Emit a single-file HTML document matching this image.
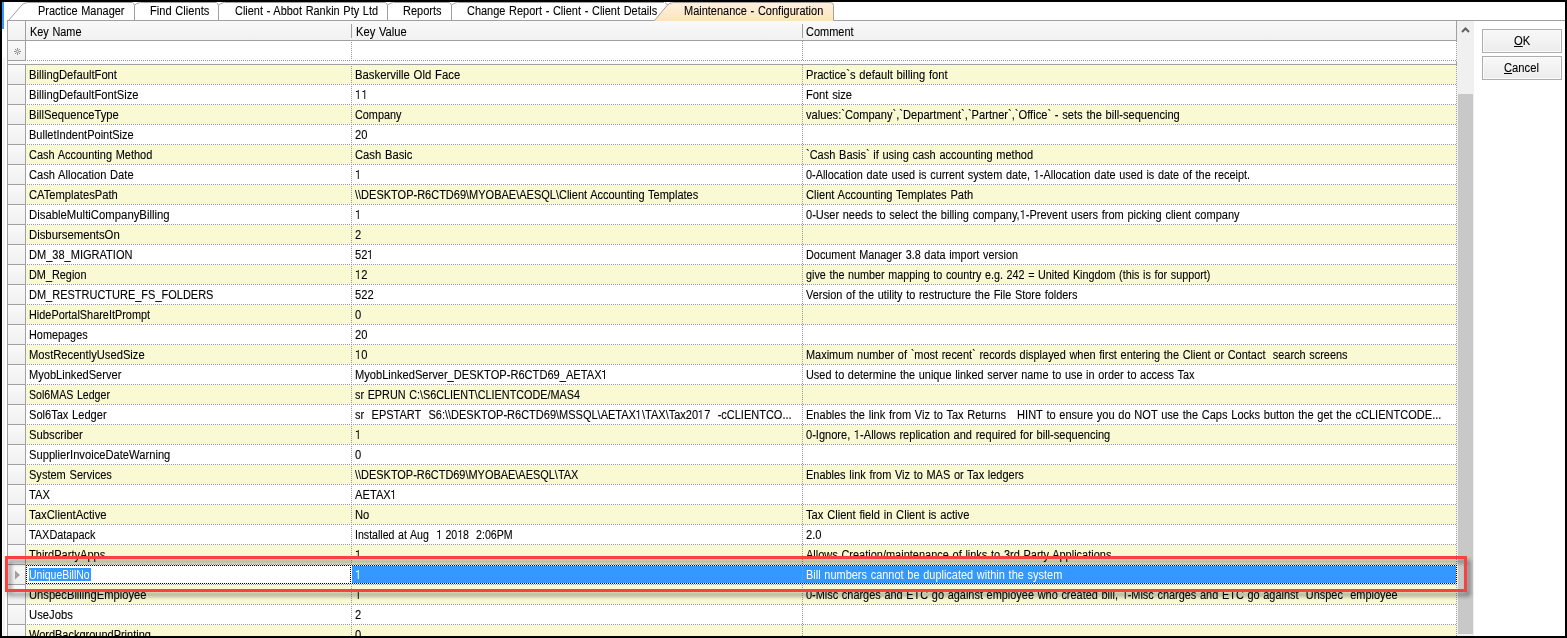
<!DOCTYPE html><html><head><meta charset="utf-8"><style>
*{margin:0;padding:0;box-sizing:border-box}
html,body{width:1567px;height:638px;overflow:hidden;background:#000}
body{position:relative;font-family:"Liberation Sans",sans-serif;font-size:11px;color:#000}
.abs{position:absolute}
.t{position:absolute;white-space:pre;line-height:13px;font-size:12px;transform:scaleX(0.935);transform-origin:0 0;-webkit-text-stroke:0.1px currentColor;word-spacing:0.7px}
.hd{background:#A0A0A0}
.dh{position:absolute;height:1px;background:repeating-linear-gradient(to right,transparent 0 1px,#9A9A9A 1px 2px)}
.dv{position:absolute;width:1px;background:repeating-linear-gradient(to bottom,transparent 0 1px,#9A9A9A 1px 2px)}
.dh1{position:absolute;height:1px;background:repeating-linear-gradient(to right,#9A9A9A 0 1px,transparent 1px 2px)}
.dv1{position:absolute;width:1px;background:repeating-linear-gradient(to bottom,#9A9A9A 0 1px,transparent 1px 2px)}
.one{display:inline-block;position:relative;width:6.67px;height:9px}
.one::before{content:'';position:absolute;left:3px;top:0;width:1px;height:9px;background:currentColor}
.one::after{content:'';position:absolute;left:1px;top:1px;width:2px;height:1px;background:currentColor}
.rh{position:absolute;left:8px;width:17px;background:linear-gradient(to bottom,#F9F9F9,#F0F0F0)}
</style></head><body>
<div class="abs" style="left:2px;top:2px;width:1563px;height:634px;background:#fff"></div>
<div class="abs" style="left:2px;top:2px;width:2px;height:27px;background:#3399FF"></div>
<div class="abs" style="left:3px;top:58px;width:2px;height:578px;background:#F3F3F3"></div>

<svg class="abs" style="left:0;top:0" width="1567" height="22" viewBox="0 0 1567 22">
<defs><linearGradient id="ag" x1="0" y1="0" x2="0" y2="1"><stop offset="0" stop-color="#FFF0DF"/><stop offset="1" stop-color="#FDE5BC"/></linearGradient></defs>
<path d="M8.5 20.5 L20.5 6.5 Q23.5 2.5 27.5 2.5 L668 2.5" fill="none" stroke="#A0A0A0" stroke-width="1"/>
<path d="M653.7 21 L667 5.5 Q669.5 2.5 673.5 2.5 L830.5 2.5 Q833.5 2.5 833.5 5.5 L833.5 21 Z" fill="url(#ag)" stroke="none"/>
<path d="M654.5 20.5 L667 5.5 Q669.5 2.5 673.5 2.5 L830.5 2.5 Q833.5 2.5 833.5 5.5 L833.5 20.5" fill="none" stroke="#A0A0A0" stroke-width="1"/>
<path d="M833.5 20.5 L1565 20.5" stroke="#A0A0A0" stroke-width="1"/>
<path d="M7 20.5 L654.5 20.5" stroke="#A0A0A0" stroke-width="1"/>
<rect x="664" y="2" width="6" height="1" fill="#fff"/>
<path d="M667.5 5 Q666.5 3.5 665 2.5" fill="none" stroke="#A0A0A0" stroke-width="1"/>

<rect x="132.5" y="2" width="8" height="1" fill="#fff"/>
<path d="M134.5 20.5 L134.5 5.5 Q134 3.5 132.5 2.5 M134.5 5.5 Q136 3.2 140 2.5" fill="none" stroke="#A0A0A0" stroke-width="1"/>
<rect x="216.5" y="2" width="8" height="1" fill="#fff"/>
<path d="M218.5 20.5 L218.5 5.5 Q218 3.5 216.5 2.5 M218.5 5.5 Q220 3.2 224 2.5" fill="none" stroke="#A0A0A0" stroke-width="1"/>
<rect x="385.5" y="2" width="8" height="1" fill="#fff"/>
<path d="M387.5 20.5 L387.5 5.5 Q387 3.5 385.5 2.5 M387.5 5.5 Q389 3.2 393 2.5" fill="none" stroke="#A0A0A0" stroke-width="1"/>
<rect x="449.5" y="2" width="8" height="1" fill="#fff"/>
<path d="M451.5 20.5 L451.5 5.5 Q451 3.5 449.5 2.5 M451.5 5.5 Q453 3.2 457 2.5" fill="none" stroke="#A0A0A0" stroke-width="1"/>
</svg>
<div class="t" style="left:38px;top:5px;transform:scaleX(0.9128);">Practice Manager</div>
<div class="t" style="left:150px;top:5px;transform:scaleX(0.9254);">Find Clients</div>
<div class="t" style="left:234.5px;top:5px;transform:scaleX(0.9116);">Client - Abbot Rankin Pty Ltd</div>
<div class="t" style="left:403px;top:5px;transform:scaleX(0.9146);">Reports</div>
<div class="t" style="left:466.5px;top:5px;transform:scaleX(0.9130);">Change Report - Client - Client Details</div>
<div class="t" style="left:684px;top:5px;transform:scaleX(0.9152);">Maintenance - Configuration</div>
<div class="abs hd" style="left:7px;top:20px;width:1px;height:616px"></div>
<div class="abs" style="left:8px;top:21px;width:1448px;height:19px;background:linear-gradient(to bottom,#F9F9F9,#F1F1F1)"></div>
<div class="abs hd" style="left:25px;top:21px;width:1px;height:19px"></div>
<div class="abs hd" style="left:7px;top:40px;width:1450px;height:1px"></div>
<div class="abs hd" style="left:1456px;top:20px;width:1px;height:21px"></div>
<div class="abs hd" style="left:351px;top:24px;width:1px;height:14px"></div>
<div class="abs hd" style="left:802px;top:24px;width:1px;height:14px"></div>
<div class="t" style="left:30px;top:26px;transform:scaleX(0.9073);">Key Name</div>
<div class="t" style="left:356px;top:26px;transform:scaleX(0.9300);">Key Value</div>
<div class="t" style="left:806px;top:26px;transform:scaleX(0.9137);">Comment</div>
<div class="rh" style="top:41px;height:19px"></div>
<div class="abs hd" style="left:25px;top:41px;width:1px;height:19px"></div>
<div class="abs hd" style="left:7px;top:60px;width:19px;height:1px"></div>
<div class="dh" style="left:26px;top:60px;width:1431px"></div>
<div class="dv" style="left:351px;top:41px;height:20px"></div>
<div class="dv1" style="left:802px;top:41px;height:20px"></div>
<div class="dv1" style="left:1456px;top:41px;height:20px"></div>
<svg class="abs" style="left:13px;top:47px" width="9" height="9" viewBox="0 0 9 9"><g stroke="#909090" stroke-width="1" fill="none"><line x1="4.5" y1="1" x2="4.5" y2="3"/><line x1="4.5" y1="6" x2="4.5" y2="8"/><line x1="1" y1="4.5" x2="3" y2="4.5"/><line x1="6" y1="4.5" x2="8" y2="4.5"/><line x1="2" y1="2" x2="3" y2="3"/><line x1="7" y1="2" x2="6" y2="3"/><line x1="2" y1="7" x2="3" y2="6"/><line x1="7" y1="7" x2="6" y2="6"/><circle cx="4.5" cy="4.5" r="1.3"/></g></svg>
<div class="abs" style="left:8px;top:61px;width:1448px;height:3px;background:#FAFAFA"></div>
<div class="abs hd" style="left:7px;top:64px;width:1450px;height:1px"></div>
<div class="abs hd" style="left:1456px;top:61px;width:1px;height:4px"></div>
<div class="rh" style="top:65px;height:19px"></div>
<div class="abs hd" style="left:25px;top:65px;width:1px;height:20px"></div>
<div class="abs hd" style="left:7px;top:84px;width:19px;height:1px"></div>
<div class="abs" style="left:26px;top:65px;width:1430px;height:19px;background:#F9F9D3"></div>
<div class="dh" style="left:26px;top:84px;width:1431px"></div>
<div class="dv" style="left:351px;top:65px;height:19px"></div>
<div class="dv1" style="left:802px;top:65px;height:19px"></div>
<div class="dv1" style="left:1456px;top:65px;height:19px"></div>
<div class="t" style="left:29px;top:69px;transform:scaleX(0.9355);">BillingDefaultFont</div>
<div class="t" style="left:355px;top:69px;transform:scaleX(0.9445);color:#000">Baskerville Old Face</div>
<div class="t" style="left:806px;top:69px;transform:scaleX(0.9298);color:#000">Practice`s default billing font</div>
<div class="rh" style="top:85px;height:19px"></div>
<div class="abs hd" style="left:25px;top:85px;width:1px;height:20px"></div>
<div class="abs hd" style="left:7px;top:104px;width:19px;height:1px"></div>
<div class="abs" style="left:26px;top:85px;width:1430px;height:19px;background:#FFFFFF"></div>
<div class="dh" style="left:26px;top:104px;width:1431px"></div>
<div class="dv" style="left:351px;top:85px;height:19px"></div>
<div class="dv1" style="left:802px;top:85px;height:19px"></div>
<div class="dv1" style="left:1456px;top:85px;height:19px"></div>
<div class="t" style="left:29px;top:89px;transform:scaleX(0.9336);">BillingDefaultFontSize</div>
<div class="t" style="left:355px;top:89px;transform:scaleX(0.9300);color:#000"><span class="one"></span><span class="one"></span></div>
<div class="t" style="left:806px;top:89px;transform:scaleX(0.9333);color:#000">Font size</div>
<div class="rh" style="top:105px;height:19px"></div>
<div class="abs hd" style="left:25px;top:105px;width:1px;height:20px"></div>
<div class="abs hd" style="left:7px;top:124px;width:19px;height:1px"></div>
<div class="abs" style="left:26px;top:105px;width:1430px;height:19px;background:#F9F9D3"></div>
<div class="dh" style="left:26px;top:124px;width:1431px"></div>
<div class="dv" style="left:351px;top:105px;height:19px"></div>
<div class="dv1" style="left:802px;top:105px;height:19px"></div>
<div class="dv1" style="left:1456px;top:105px;height:19px"></div>
<div class="t" style="left:29px;top:109px;transform:scaleX(0.9347);">BillSequenceType</div>
<div class="t" style="left:355px;top:109px;transform:scaleX(0.9040);color:#000">Company</div>
<div class="t" style="left:806px;top:109px;transform:scaleX(0.9266);color:#000">values:`Company`,`Department`,`Partner`,`Office` - sets the bill-sequencing</div>
<div class="rh" style="top:125px;height:19px"></div>
<div class="abs hd" style="left:25px;top:125px;width:1px;height:20px"></div>
<div class="abs hd" style="left:7px;top:144px;width:19px;height:1px"></div>
<div class="abs" style="left:26px;top:125px;width:1430px;height:19px;background:#FFFFFF"></div>
<div class="dh" style="left:26px;top:144px;width:1431px"></div>
<div class="dv" style="left:351px;top:125px;height:19px"></div>
<div class="dv1" style="left:802px;top:125px;height:19px"></div>
<div class="dv1" style="left:1456px;top:125px;height:19px"></div>
<div class="t" style="left:29px;top:129px;transform:scaleX(0.9177);">BulletIndentPointSize</div>
<div class="t" style="left:355px;top:129px;transform:scaleX(0.9300);color:#000">20</div>
<div class="t" style="left:806px;top:129px;transform:scaleX(0.9300);color:#000"></div>
<div class="rh" style="top:145px;height:19px"></div>
<div class="abs hd" style="left:25px;top:145px;width:1px;height:20px"></div>
<div class="abs hd" style="left:7px;top:164px;width:19px;height:1px"></div>
<div class="abs" style="left:26px;top:145px;width:1430px;height:19px;background:#F9F9D3"></div>
<div class="dh" style="left:26px;top:164px;width:1431px"></div>
<div class="dv" style="left:351px;top:145px;height:19px"></div>
<div class="dv1" style="left:802px;top:145px;height:19px"></div>
<div class="dv1" style="left:1456px;top:145px;height:19px"></div>
<div class="t" style="left:29px;top:149px;transform:scaleX(0.9143);">Cash Accounting Method</div>
<div class="t" style="left:355px;top:149px;transform:scaleX(0.9350);color:#000">Cash Basic</div>
<div class="t" style="left:806px;top:149px;transform:scaleX(0.9167);color:#000">`Cash Basis` if using cash accounting method</div>
<div class="rh" style="top:165px;height:19px"></div>
<div class="abs hd" style="left:25px;top:165px;width:1px;height:20px"></div>
<div class="abs hd" style="left:7px;top:184px;width:19px;height:1px"></div>
<div class="abs" style="left:26px;top:165px;width:1430px;height:19px;background:#FFFFFF"></div>
<div class="dh" style="left:26px;top:184px;width:1431px"></div>
<div class="dv" style="left:351px;top:165px;height:19px"></div>
<div class="dv1" style="left:802px;top:165px;height:19px"></div>
<div class="dv1" style="left:1456px;top:165px;height:19px"></div>
<div class="t" style="left:29px;top:169px;transform:scaleX(0.9270);">Cash Allocation Date</div>
<div class="t" style="left:355px;top:169px;transform:scaleX(0.9300);color:#000"><span class="one"></span></div>
<div class="t" style="left:806px;top:169px;transform:scaleX(0.9074);color:#000">0-Allocation date used is current system date, <span class="one"></span>-Allocation date used is date of the receipt.</div>
<div class="rh" style="top:185px;height:19px"></div>
<div class="abs hd" style="left:25px;top:185px;width:1px;height:20px"></div>
<div class="abs hd" style="left:7px;top:204px;width:19px;height:1px"></div>
<div class="abs" style="left:26px;top:185px;width:1430px;height:19px;background:#F9F9D3"></div>
<div class="dh" style="left:26px;top:204px;width:1431px"></div>
<div class="dv" style="left:351px;top:185px;height:19px"></div>
<div class="dv1" style="left:802px;top:185px;height:19px"></div>
<div class="dv1" style="left:1456px;top:185px;height:19px"></div>
<div class="t" style="left:29px;top:189px;transform:scaleX(0.9330);">CATemplatesPath</div>
<div class="t" style="left:355px;top:189px;transform:scaleX(0.9166);color:#000">\\DESKTOP-R6CTD69\MYOBAE\AESQL\Client Accounting Templates</div>
<div class="t" style="left:806px;top:189px;transform:scaleX(0.9257);color:#000">Client Accounting Templates Path</div>
<div class="rh" style="top:205px;height:19px"></div>
<div class="abs hd" style="left:25px;top:205px;width:1px;height:20px"></div>
<div class="abs hd" style="left:7px;top:224px;width:19px;height:1px"></div>
<div class="abs" style="left:26px;top:205px;width:1430px;height:19px;background:#FFFFFF"></div>
<div class="dh" style="left:26px;top:224px;width:1431px"></div>
<div class="dv" style="left:351px;top:205px;height:19px"></div>
<div class="dv1" style="left:802px;top:205px;height:19px"></div>
<div class="dv1" style="left:1456px;top:205px;height:19px"></div>
<div class="t" style="left:29px;top:209px;transform:scaleX(0.9456);">DisableMultiCompanyBilling</div>
<div class="t" style="left:355px;top:209px;transform:scaleX(0.9300);color:#000"><span class="one"></span></div>
<div class="t" style="left:806px;top:209px;transform:scaleX(0.9178);color:#000">0-User needs to select the billing company,<span class="one"></span>-Prevent users from picking client company</div>
<div class="rh" style="top:225px;height:19px"></div>
<div class="abs hd" style="left:25px;top:225px;width:1px;height:20px"></div>
<div class="abs hd" style="left:7px;top:244px;width:19px;height:1px"></div>
<div class="abs" style="left:26px;top:225px;width:1430px;height:19px;background:#F9F9D3"></div>
<div class="dh" style="left:26px;top:244px;width:1431px"></div>
<div class="dv" style="left:351px;top:225px;height:19px"></div>
<div class="dv1" style="left:802px;top:225px;height:19px"></div>
<div class="dv1" style="left:1456px;top:225px;height:19px"></div>
<div class="t" style="left:29px;top:229px;transform:scaleX(0.9447);">DisbursementsOn</div>
<div class="t" style="left:355px;top:229px;transform:scaleX(0.9300);color:#000">2</div>
<div class="t" style="left:806px;top:229px;transform:scaleX(0.9300);color:#000"></div>
<div class="rh" style="top:245px;height:19px"></div>
<div class="abs hd" style="left:25px;top:245px;width:1px;height:20px"></div>
<div class="abs hd" style="left:7px;top:264px;width:19px;height:1px"></div>
<div class="abs" style="left:26px;top:245px;width:1430px;height:19px;background:#FFFFFF"></div>
<div class="dh" style="left:26px;top:264px;width:1431px"></div>
<div class="dv" style="left:351px;top:245px;height:19px"></div>
<div class="dv1" style="left:802px;top:245px;height:19px"></div>
<div class="dv1" style="left:1456px;top:245px;height:19px"></div>
<div class="t" style="left:29px;top:249px;transform:scaleX(0.9198);">DM_38_MIGRATION</div>
<div class="t" style="left:355px;top:249px;transform:scaleX(0.9300);color:#000">52<span class="one"></span></div>
<div class="t" style="left:806px;top:249px;transform:scaleX(0.9047);color:#000">Document Manager 3.8 data import version</div>
<div class="rh" style="top:265px;height:19px"></div>
<div class="abs hd" style="left:25px;top:265px;width:1px;height:20px"></div>
<div class="abs hd" style="left:7px;top:284px;width:19px;height:1px"></div>
<div class="abs" style="left:26px;top:265px;width:1430px;height:19px;background:#F9F9D3"></div>
<div class="dh" style="left:26px;top:284px;width:1431px"></div>
<div class="dv" style="left:351px;top:265px;height:19px"></div>
<div class="dv1" style="left:802px;top:265px;height:19px"></div>
<div class="dv1" style="left:1456px;top:265px;height:19px"></div>
<div class="t" style="left:29px;top:269px;transform:scaleX(0.9065);">DM_Region</div>
<div class="t" style="left:355px;top:269px;transform:scaleX(0.9300);color:#000"><span class="one"></span>2</div>
<div class="t" style="left:806px;top:269px;transform:scaleX(0.8991);color:#000">give the number mapping to country e.g. 242 = United Kingdom (this is for support)</div>
<div class="rh" style="top:285px;height:19px"></div>
<div class="abs hd" style="left:25px;top:285px;width:1px;height:20px"></div>
<div class="abs hd" style="left:7px;top:304px;width:19px;height:1px"></div>
<div class="abs" style="left:26px;top:285px;width:1430px;height:19px;background:#FFFFFF"></div>
<div class="dh" style="left:26px;top:304px;width:1431px"></div>
<div class="dv" style="left:351px;top:285px;height:19px"></div>
<div class="dv1" style="left:802px;top:285px;height:19px"></div>
<div class="dv1" style="left:1456px;top:285px;height:19px"></div>
<div class="t" style="left:29px;top:289px;transform:scaleX(0.9160);">DM_RESTRUCTURE_FS_FOLDERS</div>
<div class="t" style="left:355px;top:289px;transform:scaleX(0.9300);color:#000">522</div>
<div class="t" style="left:806px;top:289px;transform:scaleX(0.9094);color:#000">Version of the utility to restructure the File Store folders</div>
<div class="rh" style="top:305px;height:19px"></div>
<div class="abs hd" style="left:25px;top:305px;width:1px;height:20px"></div>
<div class="abs hd" style="left:7px;top:324px;width:19px;height:1px"></div>
<div class="abs" style="left:26px;top:305px;width:1430px;height:19px;background:#F9F9D3"></div>
<div class="dh" style="left:26px;top:324px;width:1431px"></div>
<div class="dv" style="left:351px;top:305px;height:19px"></div>
<div class="dv1" style="left:802px;top:305px;height:19px"></div>
<div class="dv1" style="left:1456px;top:305px;height:19px"></div>
<div class="t" style="left:29px;top:309px;transform:scaleX(0.9075);">HidePortalShareItPrompt</div>
<div class="t" style="left:355px;top:309px;transform:scaleX(0.9300);color:#000">0</div>
<div class="t" style="left:806px;top:309px;transform:scaleX(0.9300);color:#000"></div>
<div class="rh" style="top:325px;height:19px"></div>
<div class="abs hd" style="left:25px;top:325px;width:1px;height:20px"></div>
<div class="abs hd" style="left:7px;top:344px;width:19px;height:1px"></div>
<div class="abs" style="left:26px;top:325px;width:1430px;height:19px;background:#FFFFFF"></div>
<div class="dh" style="left:26px;top:344px;width:1431px"></div>
<div class="dv" style="left:351px;top:325px;height:19px"></div>
<div class="dv1" style="left:802px;top:325px;height:19px"></div>
<div class="dv1" style="left:1456px;top:325px;height:19px"></div>
<div class="t" style="left:29px;top:329px;transform:scaleX(0.9063);">Homepages</div>
<div class="t" style="left:355px;top:329px;transform:scaleX(0.9300);color:#000">20</div>
<div class="t" style="left:806px;top:329px;transform:scaleX(0.9300);color:#000"></div>
<div class="rh" style="top:345px;height:19px"></div>
<div class="abs hd" style="left:25px;top:345px;width:1px;height:20px"></div>
<div class="abs hd" style="left:7px;top:364px;width:19px;height:1px"></div>
<div class="abs" style="left:26px;top:345px;width:1430px;height:19px;background:#F9F9D3"></div>
<div class="dh" style="left:26px;top:364px;width:1431px"></div>
<div class="dv" style="left:351px;top:345px;height:19px"></div>
<div class="dv1" style="left:802px;top:345px;height:19px"></div>
<div class="dv1" style="left:1456px;top:345px;height:19px"></div>
<div class="t" style="left:29px;top:349px;transform:scaleX(0.9325);">MostRecentlyUsedSize</div>
<div class="t" style="left:355px;top:349px;transform:scaleX(0.9300);color:#000"><span class="one"></span>0</div>
<div class="t" style="left:806px;top:349px;transform:scaleX(0.9116);color:#000">Maximum number of `most recent` records displayed when first entering the Client or Contact  search screens</div>
<div class="rh" style="top:365px;height:19px"></div>
<div class="abs hd" style="left:25px;top:365px;width:1px;height:20px"></div>
<div class="abs hd" style="left:7px;top:384px;width:19px;height:1px"></div>
<div class="abs" style="left:26px;top:365px;width:1430px;height:19px;background:#FFFFFF"></div>
<div class="dh" style="left:26px;top:384px;width:1431px"></div>
<div class="dv" style="left:351px;top:365px;height:19px"></div>
<div class="dv1" style="left:802px;top:365px;height:19px"></div>
<div class="dv1" style="left:1456px;top:365px;height:19px"></div>
<div class="t" style="left:29px;top:369px;transform:scaleX(0.9232);">MyobLinkedServer</div>
<div class="t" style="left:355px;top:369px;transform:scaleX(0.9257);color:#000">MyobLinkedServer_DESKTOP-R6CTD69_AETAX<span class="one"></span></div>
<div class="t" style="left:806px;top:369px;transform:scaleX(0.9080);color:#000">Used to determine the unique linked server name to use in order to access Tax</div>
<div class="rh" style="top:385px;height:19px"></div>
<div class="abs hd" style="left:25px;top:385px;width:1px;height:20px"></div>
<div class="abs hd" style="left:7px;top:404px;width:19px;height:1px"></div>
<div class="abs" style="left:26px;top:385px;width:1430px;height:19px;background:#F9F9D3"></div>
<div class="dh" style="left:26px;top:404px;width:1431px"></div>
<div class="dv" style="left:351px;top:385px;height:19px"></div>
<div class="dv1" style="left:802px;top:385px;height:19px"></div>
<div class="dv1" style="left:1456px;top:385px;height:19px"></div>
<div class="t" style="left:29px;top:389px;transform:scaleX(0.8857);">Sol6MAS Ledger</div>
<div class="t" style="left:355px;top:389px;transform:scaleX(0.9020);color:#000">sr EPRUN C:\S6CLIENT\CLIENTCODE/MAS4</div>
<div class="t" style="left:806px;top:389px;transform:scaleX(0.9300);color:#000"></div>
<div class="rh" style="top:405px;height:19px"></div>
<div class="abs hd" style="left:25px;top:405px;width:1px;height:20px"></div>
<div class="abs hd" style="left:7px;top:424px;width:19px;height:1px"></div>
<div class="abs" style="left:26px;top:405px;width:1430px;height:19px;background:#FFFFFF"></div>
<div class="dh" style="left:26px;top:424px;width:1431px"></div>
<div class="dv" style="left:351px;top:405px;height:19px"></div>
<div class="dv1" style="left:802px;top:405px;height:19px"></div>
<div class="dv1" style="left:1456px;top:405px;height:19px"></div>
<div class="t" style="left:29px;top:409px;transform:scaleX(0.9229);">Sol6Tax Ledger</div>
<div class="t" style="left:355px;top:409px;transform:scaleX(0.9166);color:#000">sr  EPSTART  S6:\\DESKTOP-R6CTD69\MSSQL\AETAX<span class="one"></span>\TAX\Tax20<span class="one"></span>7  -cCLIENTCO...</div>
<div class="t" style="left:806px;top:409px;transform:scaleX(0.9205);color:#000">Enables the link from Viz to Tax Returns   HINT to ensure you do NOT use the Caps Locks button the get the cCLIENTCODE...</div>
<div class="rh" style="top:425px;height:19px"></div>
<div class="abs hd" style="left:25px;top:425px;width:1px;height:20px"></div>
<div class="abs hd" style="left:7px;top:444px;width:19px;height:1px"></div>
<div class="abs" style="left:26px;top:425px;width:1430px;height:19px;background:#F9F9D3"></div>
<div class="dh" style="left:26px;top:444px;width:1431px"></div>
<div class="dv" style="left:351px;top:425px;height:19px"></div>
<div class="dv1" style="left:802px;top:425px;height:19px"></div>
<div class="dv1" style="left:1456px;top:425px;height:19px"></div>
<div class="t" style="left:29px;top:429px;transform:scaleX(0.9393);">Subscriber</div>
<div class="t" style="left:355px;top:429px;transform:scaleX(0.9300);color:#000"><span class="one"></span></div>
<div class="t" style="left:806px;top:429px;transform:scaleX(0.9209);color:#000">0-Ignore, <span class="one"></span>-Allows replication and required for bill-sequencing</div>
<div class="rh" style="top:445px;height:19px"></div>
<div class="abs hd" style="left:25px;top:445px;width:1px;height:20px"></div>
<div class="abs hd" style="left:7px;top:464px;width:19px;height:1px"></div>
<div class="abs" style="left:26px;top:445px;width:1430px;height:19px;background:#FFFFFF"></div>
<div class="dh" style="left:26px;top:464px;width:1431px"></div>
<div class="dv" style="left:351px;top:445px;height:19px"></div>
<div class="dv1" style="left:802px;top:445px;height:19px"></div>
<div class="dv1" style="left:1456px;top:445px;height:19px"></div>
<div class="t" style="left:29px;top:449px;transform:scaleX(0.9320);">SupplierInvoiceDateWarning</div>
<div class="t" style="left:355px;top:449px;transform:scaleX(0.9300);color:#000">0</div>
<div class="t" style="left:806px;top:449px;transform:scaleX(0.9300);color:#000"></div>
<div class="rh" style="top:465px;height:19px"></div>
<div class="abs hd" style="left:25px;top:465px;width:1px;height:20px"></div>
<div class="abs hd" style="left:7px;top:484px;width:19px;height:1px"></div>
<div class="abs" style="left:26px;top:465px;width:1430px;height:19px;background:#F9F9D3"></div>
<div class="dh" style="left:26px;top:484px;width:1431px"></div>
<div class="dv" style="left:351px;top:465px;height:19px"></div>
<div class="dv1" style="left:802px;top:465px;height:19px"></div>
<div class="dv1" style="left:1456px;top:465px;height:19px"></div>
<div class="t" style="left:29px;top:469px;transform:scaleX(0.9202);">System Services</div>
<div class="t" style="left:355px;top:469px;transform:scaleX(0.9118);color:#000">\\DESKTOP-R6CTD69\MYOBAE\AESQL\TAX</div>
<div class="t" style="left:806px;top:469px;transform:scaleX(0.9127);color:#000">Enables link from Viz to MAS or Tax ledgers</div>
<div class="rh" style="top:485px;height:19px"></div>
<div class="abs hd" style="left:25px;top:485px;width:1px;height:20px"></div>
<div class="abs hd" style="left:7px;top:504px;width:19px;height:1px"></div>
<div class="abs" style="left:26px;top:485px;width:1430px;height:19px;background:#FFFFFF"></div>
<div class="dh" style="left:26px;top:504px;width:1431px"></div>
<div class="dv" style="left:351px;top:485px;height:19px"></div>
<div class="dv1" style="left:802px;top:485px;height:19px"></div>
<div class="dv1" style="left:1456px;top:485px;height:19px"></div>
<div class="t" style="left:29px;top:489px;transform:scaleX(0.9300);">TAX</div>
<div class="t" style="left:355px;top:489px;transform:scaleX(0.9300);color:#000">AETAX<span class="one"></span></div>
<div class="t" style="left:806px;top:489px;transform:scaleX(0.9300);color:#000"></div>
<div class="rh" style="top:505px;height:19px"></div>
<div class="abs hd" style="left:25px;top:505px;width:1px;height:20px"></div>
<div class="abs hd" style="left:7px;top:524px;width:19px;height:1px"></div>
<div class="abs" style="left:26px;top:505px;width:1430px;height:19px;background:#F9F9D3"></div>
<div class="dh" style="left:26px;top:524px;width:1431px"></div>
<div class="dv" style="left:351px;top:505px;height:19px"></div>
<div class="dv1" style="left:802px;top:505px;height:19px"></div>
<div class="dv1" style="left:1456px;top:505px;height:19px"></div>
<div class="t" style="left:29px;top:509px;transform:scaleX(0.9463);">TaxClientActive</div>
<div class="t" style="left:355px;top:509px;transform:scaleX(0.9300);color:#000">No</div>
<div class="t" style="left:806px;top:509px;transform:scaleX(0.9303);color:#000">Tax Client field in Client is active</div>
<div class="rh" style="top:525px;height:19px"></div>
<div class="abs hd" style="left:25px;top:525px;width:1px;height:20px"></div>
<div class="abs hd" style="left:7px;top:544px;width:19px;height:1px"></div>
<div class="abs" style="left:26px;top:525px;width:1430px;height:19px;background:#FFFFFF"></div>
<div class="dh" style="left:26px;top:544px;width:1431px"></div>
<div class="dv" style="left:351px;top:525px;height:19px"></div>
<div class="dv1" style="left:802px;top:525px;height:19px"></div>
<div class="dv1" style="left:1456px;top:525px;height:19px"></div>
<div class="t" style="left:29px;top:529px;transform:scaleX(0.9082);">TAXDatapack</div>
<div class="t" style="left:355px;top:529px;transform:scaleX(0.8842);color:#000">Installed at Aug  <span class="one"></span> 20<span class="one"></span>8  2:06PM</div>
<div class="t" style="left:806px;top:529px;transform:scaleX(0.9300);color:#000">2.0</div>
<div class="rh" style="top:545px;height:19px"></div>
<div class="abs hd" style="left:25px;top:545px;width:1px;height:20px"></div>
<div class="abs hd" style="left:7px;top:564px;width:19px;height:1px"></div>
<div class="abs" style="left:26px;top:545px;width:1430px;height:19px;background:#F9F9D3"></div>
<div class="dh" style="left:26px;top:564px;width:1431px"></div>
<div class="dv" style="left:351px;top:545px;height:19px"></div>
<div class="dv1" style="left:802px;top:545px;height:19px"></div>
<div class="dv1" style="left:1456px;top:545px;height:19px"></div>
<div class="t" style="left:29px;top:549px;transform:scaleX(0.9220);">ThirdPartyApps</div>
<div class="t" style="left:355px;top:549px;transform:scaleX(0.9300);color:#000"><span class="one"></span></div>
<div class="t" style="left:806px;top:549px;transform:scaleX(0.9150);color:#000">Allows Creation/maintenance of links to 3rd Party Applications</div>
<div class="rh" style="top:565px;height:19px"></div>
<div class="abs hd" style="left:25px;top:565px;width:1px;height:20px"></div>
<div class="abs hd" style="left:7px;top:584px;width:19px;height:1px"></div>
<div class="abs" style="left:26px;top:565px;width:326px;height:19px;background:#fff"></div>
<div class="abs" style="left:352px;top:565px;width:1104px;height:19px;background:#3399FF"></div>
<div class="dh" style="left:26px;top:584px;width:1431px"></div>
<div class="dv1" style="left:802px;top:565px;height:19px"></div>
<div class="dv1" style="left:1456px;top:565px;height:19px"></div>
<div class="abs" style="left:29px;top:568px;width:62px;height:13px;background:#3399FF"></div>
<div class="t" style="left:29px;top:569px;color:#fff;transform:scaleX(0.875);-webkit-text-stroke:0">UniqueBillNo</div>
<div class="t" style="left:355px;top:569px;transform:scaleX(0.9300);color:#fff;-webkit-text-stroke:0"><span class="one"></span></div>
<div class="t" style="left:806px;top:569px;transform:scaleX(0.9140);color:#fff;-webkit-text-stroke:0">Bill numbers cannot be duplicated within the system</div>
<div class="rh" style="top:585px;height:19px"></div>
<div class="abs hd" style="left:25px;top:585px;width:1px;height:20px"></div>
<div class="abs hd" style="left:7px;top:604px;width:19px;height:1px"></div>
<div class="abs" style="left:26px;top:585px;width:1430px;height:19px;background:#F9F9D3"></div>
<div class="dh" style="left:26px;top:604px;width:1431px"></div>
<div class="dv" style="left:351px;top:585px;height:19px"></div>
<div class="dv1" style="left:802px;top:585px;height:19px"></div>
<div class="dv1" style="left:1456px;top:585px;height:19px"></div>
<div class="t" style="left:29px;top:589px;transform:scaleX(0.9320);">UnspecBillingEmployee</div>
<div class="t" style="left:355px;top:589px;transform:scaleX(0.9300);color:#000"><span class="one"></span></div>
<div class="t" style="left:806px;top:589px;transform:scaleX(0.9108);color:#000">0-Misc charges and ETC go against employee who created bill, <span class="one"></span>-Misc charges and ETC go against `Unspec` employee</div>
<div class="rh" style="top:605px;height:19px"></div>
<div class="abs hd" style="left:25px;top:605px;width:1px;height:20px"></div>
<div class="abs hd" style="left:7px;top:624px;width:19px;height:1px"></div>
<div class="abs" style="left:26px;top:605px;width:1430px;height:19px;background:#FFFFFF"></div>
<div class="dh" style="left:26px;top:624px;width:1431px"></div>
<div class="dv" style="left:351px;top:605px;height:19px"></div>
<div class="dv1" style="left:802px;top:605px;height:19px"></div>
<div class="dv1" style="left:1456px;top:605px;height:19px"></div>
<div class="t" style="left:29px;top:609px;transform:scaleX(0.9378);">UseJobs</div>
<div class="t" style="left:355px;top:609px;transform:scaleX(0.9300);color:#000">2</div>
<div class="t" style="left:806px;top:609px;transform:scaleX(0.9300);color:#000"></div>
<div class="rh" style="top:625px;height:19px"></div>
<div class="abs hd" style="left:25px;top:625px;width:1px;height:20px"></div>
<div class="abs hd" style="left:7px;top:644px;width:19px;height:1px"></div>
<div class="abs" style="left:26px;top:625px;width:1430px;height:19px;background:#F9F9D3"></div>
<div class="dh" style="left:26px;top:644px;width:1431px"></div>
<div class="dv" style="left:351px;top:625px;height:19px"></div>
<div class="dv1" style="left:802px;top:625px;height:19px"></div>
<div class="dv1" style="left:1456px;top:625px;height:19px"></div>
<div class="t" style="left:29px;top:629px;transform:scaleX(0.9150);">WordBackgroundPrinting</div>
<div class="t" style="left:355px;top:629px;transform:scaleX(0.9300);color:#000">0</div>
<div class="t" style="left:806px;top:629px;transform:scaleX(0.9300);color:#000"></div>
<svg class="abs" style="left:15px;top:570px" width="6" height="10" viewBox="0 0 6 10"><path d="M0 0.5 L5 5 L0 9.5 Z" fill="#A0A0A0"/></svg>
<div class="abs" style="left:26px;top:565px;width:1431px;height:1px;background:repeating-linear-gradient(to right,#000 0 1px,#fff 1px 2px)"></div>
<div class="abs" style="left:26px;top:583px;width:1431px;height:1px;background:repeating-linear-gradient(to right,#000 0 1px,#fff 1px 2px)"></div>
<div class="abs" style="left:26px;top:565px;width:1px;height:19px;background:repeating-linear-gradient(to bottom,#000 0 1px,#fff 1px 2px)"></div>
<div class="abs" style="left:350px;top:565px;width:1px;height:19px;background:repeating-linear-gradient(to bottom,#000 0 1px,#fff 1px 2px)"></div>
<div class="abs" style="left:1456px;top:565px;width:1px;height:19px;background:repeating-linear-gradient(to bottom,#000 0 1px,#fff 1px 2px)"></div>
<div class="abs" style="left:1457px;top:21px;width:17px;height:615px;background:#F0F0F0"></div>
<div class="abs" style="left:1458px;top:94px;width:15px;height:540px;background:#C8C8C8"></div>
<svg class="abs" style="left:1461px;top:26px" width="9" height="8" viewBox="0 0 9 8"><path d="M1 6 L4.5 2.5 L8 6" fill="none" stroke="#606060" stroke-width="2"/></svg>
<div class="abs" style="left:1482px;top:29px;width:80px;height:24px;border:1px solid #ADADAD;background:linear-gradient(to bottom,#F8F8F8,#ECECEC);box-shadow:inset 0 0 0 1px #FBFBFB"></div>
<div class="abs" style="left:1482px;top:56px;width:80px;height:24px;border:1px solid #ADADAD;background:linear-gradient(to bottom,#F8F8F8,#ECECEC);box-shadow:inset 0 0 0 1px #FBFBFB"></div>
<div class="t" style="left:1513.5px;top:35px"><u>O</u>K</div>
<div class="t" style="left:1503.5px;top:62px"><u>C</u>ancel</div>
<div class="abs" style="left:5px;top:556px;width:1462px;height:36px;border:3px solid #FA4141;filter:drop-shadow(3px 4px 2px rgba(0,0,0,0.45))"></div>
<div class="abs" style="left:0;top:636px;width:1567px;height:2px;background:#000"></div>
<div class="abs" style="left:1565px;top:0;width:2px;height:638px;background:#000"></div>
<div class="abs" style="left:0;top:0;width:1567px;height:2px;background:#000"></div>
<div class="abs" style="left:0;top:0;width:2px;height:638px;background:#000"></div>
</body></html>
